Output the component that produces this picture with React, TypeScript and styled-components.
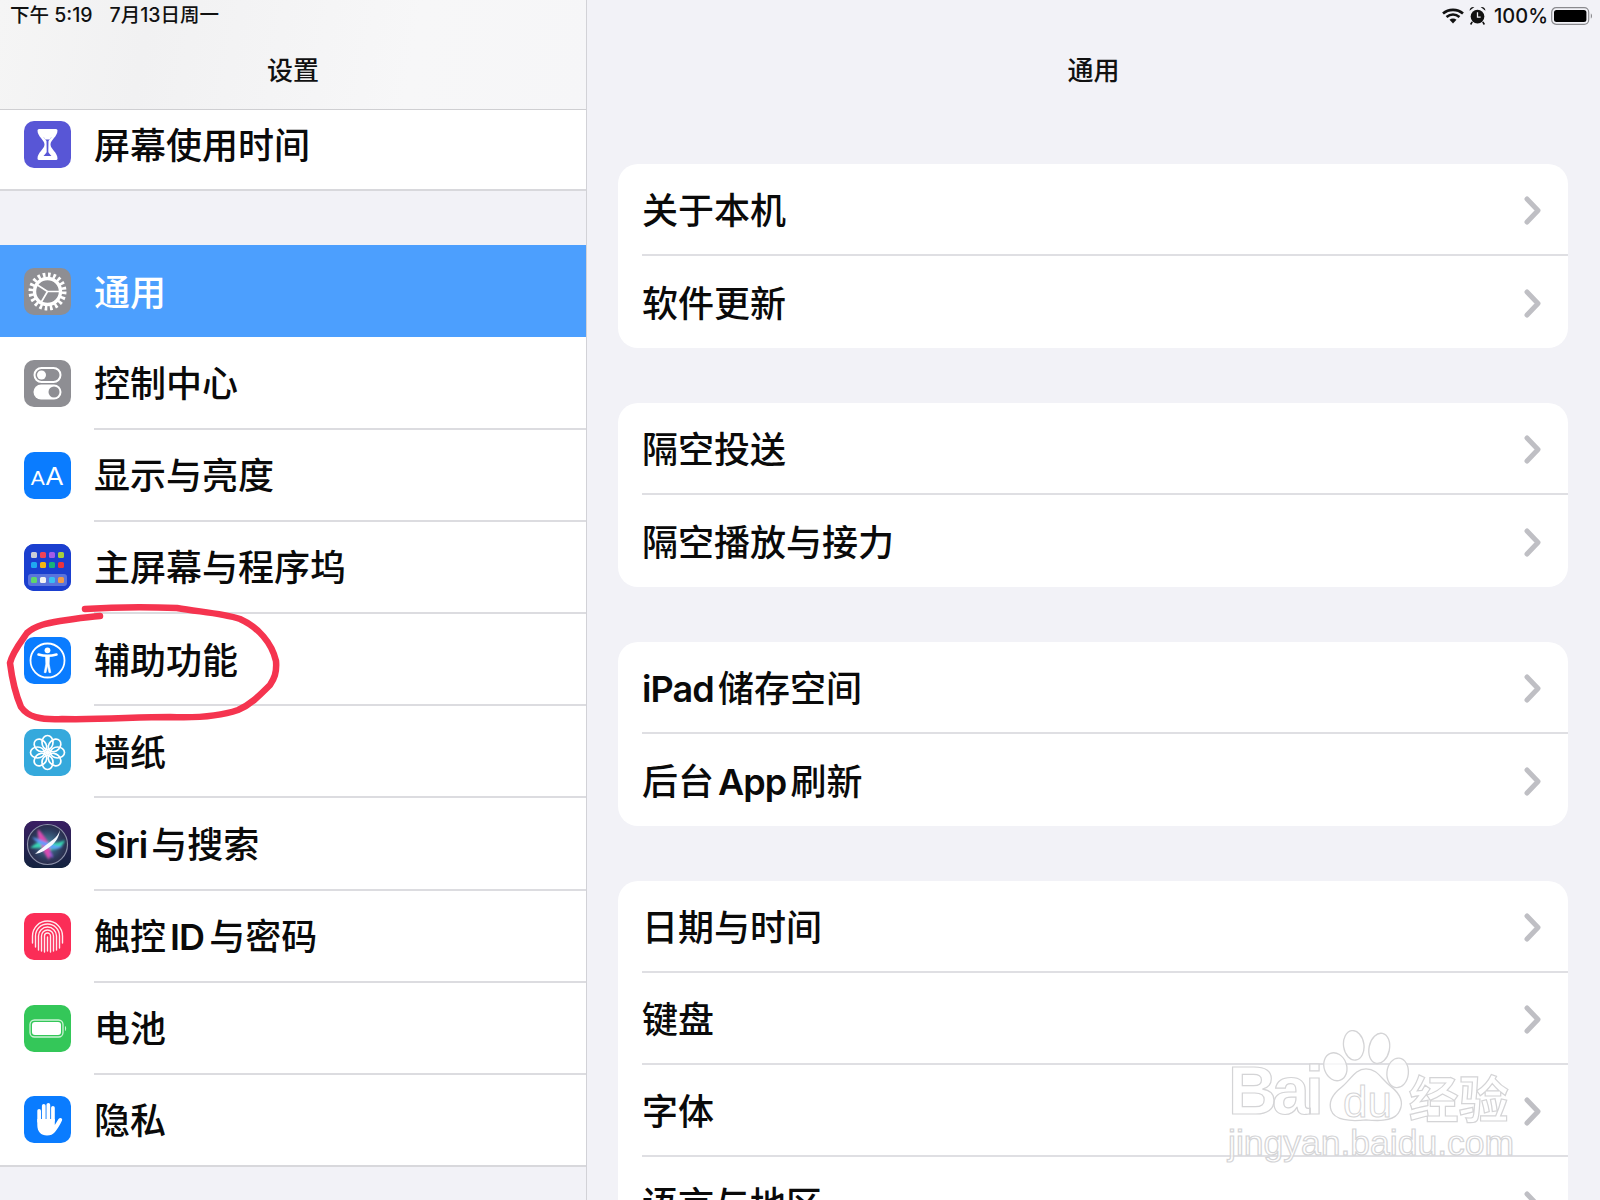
import React from "react";
import styled, { createGlobalStyle } from "styled-components";

const Global = createGlobalStyle`
  html, body { margin: 0; padding: 0; background: #f2f2f7; }
  body { font-family: Inter, "Noto Sans CJK SC", "Noto Sans", sans-serif; color: #0a0a0a; }
`;

const Screen = styled.div`
  position: relative;
  display: flex;
  width: 1600px;
  height: 1200px;
  overflow: hidden;
  background: #f2f2f7;
`;

const Sidebar = styled.aside`
  display: flex;
  flex-direction: column;
  width: 587px;
  flex: none;
  height: 100%;
  box-sizing: border-box;
  border-right: 1px solid #d2d2d7;
  background: #f2f2f7;
`;

const Bar = styled.header<{ $side?: boolean }>`
  flex: none;
  height: 110px;
  box-sizing: border-box;
  display: flex;
  flex-direction: column;
  background: ${(p) => (p.$side ? "linear-gradient(100deg, #f5f5f5 0%, #f1f1f2 25%, #f7f7f8 70%, #f6f6f8 100%)" : "#f2f2f7")};
  border-bottom: ${(p) => (p.$side ? "1px solid #cfcfd2" : "1px solid #f2f2f7")};
`;

const StatusRow = styled.div<{ $end?: boolean }>`
  height: 31px;
  display: flex;
  align-items: center;
  justify-content: ${(p) => (p.$end ? "flex-end" : "flex-start")};
  gap: 5px;
  padding: 0 7px 0 10px;
  font-size: 19.5px;
  font-weight: 500;
  line-height: 1;
  color: #111;
`;

const DateText = styled.span`
  margin-left: 12px;
`;

const Percent = styled.span`
  font-size: 20px;
  margin: 0 -2px 0 3px;
`;

const Title = styled.h1`
  margin: 0;
  flex: 1;
  display: flex;
  align-items: center;
  justify-content: center;
  padding-bottom: 4px;
  font-size: 26px;
  font-weight: 500;
  color: #111;
`;

const SideList = styled.div`
  flex: 1;
  overflow: hidden;
  display: flex;
  flex-direction: column;
`;

const SideGroup = styled.div<{ $top?: boolean }>`
  display: flex;
  flex-direction: column;
  margin-top: ${(p) => (p.$top ? "-11px" : "54px")};
  background: #fff;
  flex: none;
`;

const SideRow = styled.div<{ $selected?: boolean; $last?: boolean }>`
  display: flex;
  align-items: stretch;
  height: 92.2px;
  box-sizing: border-box;
  background: ${(p) => (p.$selected ? "#4c9ffe" : "#fff")};
  border-bottom: ${(p) => (p.$last ? "2px solid #d8d8dc" : "none")};
`;

const IconSlot = styled.div`
  flex: none;
  width: 94px;
  box-sizing: border-box;
  padding-left: 24px;
  display: flex;
  align-items: center;
`;

const IconTile = styled.div<{ $bg: string }>`
  width: 47px;
  height: 47px;
  border-radius: 10px;
  background: ${(p) => p.$bg};
  display: flex;
  align-items: center;
  justify-content: center;
  overflow: hidden;
  color: #fff;
  svg { display: block; }
`;

const AaGlyph = styled.span`
  font-family: "Liberation Sans", sans-serif;
  font-size: 26px;
  line-height: 1;
  letter-spacing: 1px;
  color: #fff;
`;
const SmallA = styled.span`
  font-size: 21px;
`;

const SideBody = styled.div<{ $plain?: boolean; $selected?: boolean }>`
  flex: 1;
  display: flex;
  align-items: center;
  font-size: 36px;
  font-weight: 500;
  line-height: 1;
  padding-top: 3px;
  box-sizing: border-box;
  color: ${(p) => (p.$selected ? "#fff" : "#0a0a0a")};
  border-bottom: ${(p) => (p.$plain ? "none" : "2px solid #dcdce0")};
`;

const Detail = styled.main`
  flex: 1;
  height: 100%;
  display: flex;
  flex-direction: column;
  min-width: 0;
`;

const DetailBody = styled.div`
  flex: 1;
  overflow: hidden;
  padding: 54px 32px 0 31px;
  display: flex;
  flex-direction: column;
  gap: 54.6px;
`;

const Card = styled.section`
  flex: none;
  background: #fff;
  border-radius: 20px;
  overflow: hidden;
`;

const CardRow = styled.div`
  display: flex;
  height: 92.2px;
  box-sizing: border-box;
  padding-left: 24px;
`;

const CardBody = styled.div<{ $last?: boolean }>`
  flex: 1;
  display: flex;
  align-items: center;
  justify-content: space-between;
  padding-right: 27px;
  padding-top: 3px;
  font-size: 36px;
  font-weight: 500;
  line-height: 1;
  color: #0a0a0a;
  box-sizing: border-box;
  border-bottom: ${(p) => (p.$last ? "none" : "2px solid #dfdfe3")};
`;

const Latin = styled.span<{ $before?: number; $after?: number }>`
  margin-left: ${(p) => p.$before ?? 0}px;
  margin-right: ${(p) => p.$after ?? 0}px;
  letter-spacing: -0.9px;
  font-weight: 600;
`;

const Stroke = styled.div`
  position: absolute;
  left: 0;
  top: 591px;
  width: 300px;
  height: 145px;
  pointer-events: none;
  svg { display: block; }
`;

const Watermark = styled.div`
  position: absolute;
  left: 1228px;
  top: 1030px;
  width: 300px;
  height: 140px;
  display: flex;
  flex-direction: column;
  pointer-events: none;
  color: rgba(255, 255, 255, 0.75);
  -webkit-text-stroke: 1.2px #d4d4d6;
  font-family: "Liberation Sans", "Noto Sans CJK SC", sans-serif;
`;

const MarkTop = styled.div`
  height: 94px;
  display: flex;
  align-items: flex-end;
  font-size: 68px;
  font-weight: 700;
  line-height: 1;
  letter-spacing: -5px;
  svg { flex: none; margin: 0 0 -4px 2px; }
`;

const MarkCjk = styled.span`
  font-family: "Noto Sans CJK SC", sans-serif;
  font-size: 50px;
  font-weight: 700;
  line-height: 56px;
  letter-spacing: 0;
  margin-left: -2px;
`;

const MarkUrl = styled.div`
  font-size: 35.500px;
  line-height: 38px;
  white-space: nowrap;
`;

const DuText = styled.span`
  position: absolute;
  left: 1343px;
  top: 1080px;
  font-family: "Liberation Sans", sans-serif;
  font-size: 44px;
  line-height: 1;
  color: rgba(255, 255, 255, 0.75);
  -webkit-text-stroke: 1px #d4d4d6;
  pointer-events: none;
`;

const Hourglass = () => (
  <svg width="47" height="47" viewBox="0 0 47 47">
    <path d="M15 8h17a1.500 1.500 0 0 1 1.500 1.500c0 6-7 9.500-7 14 0 4.500 7 8 7 14a1.500 1.500 0 0 1-1.500 1.500H15a1.500 1.500 0 0 1-1.500-1.500c0-6 7-9.500 7-14 0-4.500-7-8-7-14A1.500 1.500 0 0 1 15 8z" fill="#fff" />
    <path d="M19.500 16h8l-3 4-.2 10.500c0 1.500 2.200 3 3.200 4.500h-8c1-1.500 3.200-3 3.200-4.500L22.500 20z" fill="#5856d6" />
    <path d="M22.500 15h2.200v1h-2.200z" fill="#fff" />
    <path d="M19 15h9l-2.300 3.500h-4.400z" fill="#fff" />
  </svg>
);

const Gear = () => (
  <svg width="47" height="47" viewBox="0 0 47 47" fill="none" stroke="#fff">
    <circle cx="23.500" cy="23.500" r="16.500" strokeWidth="5" strokeDasharray="2.600 2.585" />
    <circle cx="23.500" cy="23.500" r="13" strokeWidth="3.400" />
    <path d="M23.500 23.500L13.500 17M23.500 23.500H36M23.500 23.500L17 34.500" strokeWidth="1.700" />
  </svg>
);

const Toggles = () => (
  <svg width="47" height="47" viewBox="0 0 47 47" fill="none">
    <rect x="10.500" y="8" width="26" height="14" rx="7" stroke="#fff" strokeWidth="2" />
    <circle cx="17.500" cy="15" r="4.500" fill="#fff" />
    <rect x="9.500" y="24.500" width="28" height="15" rx="7.500" fill="#fff" />
    <circle cx="30" cy="32" r="5.500" fill="#8e8e93" />
  </svg>
);

const DOCK_ROWS = [
  { y: 8, fill: ["#c9cdd6", "#ef4358", "#a35be8", "#a5cf3e"] },
  { y: 18, fill: ["#1fa9f0", "#f4b514", "#18b27a", "#e8333f"] },
];
const DOCK_COLS = [7, 16, 25, 34];
const DOCK_BOTTOM = ["#5fd66a", "#f2f2f2", "#39bdf2", "#f09a4a"];

const Dock = () => (
  <svg width="47" height="47" viewBox="0 0 47 47">
    <rect width="47" height="47" fill="#1b3fcf" />
    {DOCK_ROWS.map((r) =>
      DOCK_COLS.map((x, i) => <rect key={`${r.y}-${x}`} x={x} y={r.y} width="6" height="6" rx="1.500" fill={r.fill[i]} />)
    )}
    <rect x="4" y="30" width="39" height="12" rx="3" fill="#fff" opacity=".28" />
    {DOCK_COLS.map((x, i) => (
      <rect key={x} x={x} y="33" width="6" height="6" rx="1.500" fill={DOCK_BOTTOM[i]} />
    ))}
  </svg>
);

const Accessibility = () => (
  <svg width="47" height="47" viewBox="0 0 47 47" fill="none" stroke="#fff">
    <circle cx="23.500" cy="23.500" r="17" strokeWidth="1.800" />
    <circle cx="23.500" cy="13.300" r="2.900" fill="#fff" stroke="none" />
    <path d="M14.500 17.500c3 .9 6 1.300 9 1.300s6-.4 9-1.300" strokeWidth="2.600" strokeLinecap="round" />
    <path d="M21.500 18.500h4l-.3 8.500 1.600 8.500-1.800.2-1.500-7.200-1.500 7.200-1.800-.2 1.600-8.500z" fill="#fff" stroke="#fff" strokeWidth=".6" strokeLinejoin="round" />
  </svg>
);

const Flower = () => (
  <svg width="47" height="47" viewBox="0 0 47 47" fill="none" stroke="#fff" strokeWidth="1.700">
    {[0, 45, 90, 135, 180, 225, 270, 315].map((a) => (
      <ellipse key={a} cx="23.500" cy="13.500" rx="5.500" ry="7" transform={`rotate(${a} 23.500 23.500)`} />
    ))}
    <circle cx="23.500" cy="23.500" r="2.500" fill="#fff" stroke="none" />
  </svg>
);

const Siri = () => (
  <svg width="47" height="47" viewBox="0 0 47 47">
    <defs>
      <linearGradient id="siriBg" x1="0" y1="0" x2="0" y2="1">
        <stop offset="0" stopColor="#3a1f63" />
        <stop offset="1" stopColor="#13233f" />
      </linearGradient>
      <radialGradient id="siriOrb" cx=".5" cy=".5" r=".5">
        <stop offset="0" stopColor="#4d8aa8" />
        <stop offset=".75" stopColor="#2c3a5c" />
        <stop offset="1" stopColor="#2a2c4c" />
      </radialGradient>
      <filter id="siriSoft" x="-20%" y="-20%" width="140%" height="140%">
        <feGaussianBlur stdDeviation=".8" />
      </filter>
    </defs>
    <rect width="47" height="47" fill="url(#siriBg)" />
    <circle cx="23.500" cy="23.500" r="20" fill="url(#siriOrb)" stroke="#8a90a8" strokeWidth="1.200" />
    <g filter="url(#siriSoft)">
      <path d="M6 27c6-5 12-8 18-6 6 2 11 1 17-2-3 9-11 11-18 9-6-2-11-1-17-1z" fill="#38d8b4" />
      <path d="M14 8c4 4 7 8 10 13 3 5 3 12 1 18-4-5-6-10-8-15-2-5-4-10-3-16z" fill="#d84bb0" />
      <path d="M8 16c6 2 11 4 16 6 5 2 10 4 15 3-5 4-11 3-16 1-5-2-11-5-15-10z" fill="#5f9cff" />
      <path d="M26 30c2 2 3 4 3 7-3-1-4-4-3-7z" fill="#9d58e0" />
    </g>
    <path d="M36 9c-2 6-6 9-10 12-5 4-10 7-15 12 6-1 11-4 16-8 5-4 8-9 9-16z" fill="#f6f8ff" />
  </svg>
);

const Fingerprint = () => (
  <svg width="47" height="47" viewBox="0 0 47 47" fill="none" stroke="#fff" strokeWidth="1.400" strokeLinecap="round" opacity=".9">
    <path d="M8.500 30v-7a15 15 0 0 1 30 0v7" />
    <path d="M11.500 34V23a12 12 0 0 1 24 0v12" />
    <path d="M14.500 37V23a9 9 0 0 1 18 0v14" />
    <path d="M17.500 38V23a6 6 0 0 1 12 0v15" />
    <path d="M20.500 39V23a3 3 0 0 1 6 0v16" />
    <path d="M23.500 24v14" />
  </svg>
);

const BatteryTile = () => (
  <svg width="47" height="47" viewBox="0 0 47 47" fill="none">
    <rect x="6" y="15" width="33" height="17" rx="4.500" stroke="#cdf3d6" strokeWidth="1.300" />
    <rect x="8" y="17" width="29" height="13" rx="3" fill="#fff" />
    <path d="M41 21c1.500.5 1.500 4.500 0 5z" fill="#cdf3d6" />
  </svg>
);

const Hand = () => (
  <svg width="47" height="47" viewBox="0 0 47 47" fill="#fff">
    <rect x="13.300" y="13" width="3.700" height="14" rx="1.850" />
    <rect x="17.900" y="8" width="3.700" height="18" rx="1.850" />
    <rect x="22.500" y="7" width="3.700" height="18" rx="1.850" />
    <rect x="27.100" y="10" width="3.700" height="16" rx="1.850" />
    <path d="M13.300 23H30.800V29L34.500 23C36 21 39 22 38 24.500C36 29 33.500 33 31 36C29 38.500 26.500 39.500 23 39.500C17 39.500 13.300 35.500 13.300 29Z" />
  </svg>
);

const WifiIcon = () => (
  <svg width="22" height="16" viewBox="0 0 22 16" fill="none" stroke="#111" strokeLinecap="butt">
    <path d="M1 5.500C6.500.6 15.500.6 21 5.500" strokeWidth="2.600" />
    <path d="M4.500 9c4-3.300 9-3.300 13 0" strokeWidth="2.600" />
    <path d="M11 15.500l-3.500-3.700c2-1.700 5-1.700 7 0z" fill="#111" stroke="none" />
  </svg>
);

const AlarmIcon = () => (
  <svg width="17" height="19" viewBox="0 0 16 18">
    <circle cx="8" cy="10" r="6.500" fill="#111" />
    <path d="M8 6v4.500h3" stroke="#f2f2f7" strokeWidth="1.200" fill="none" />
    <path d="M.5 4.500C.5 2 2.500.5 5 1zM15.500 4.500C15.500 2 13.500.5 11 1z" fill="#111" />
    <path d="M3 15l-1.500 2.500M13 15l1.500 2.500" stroke="#111" strokeWidth="1.500" />
  </svg>
);

const BatteryIcon = () => (
  <svg width="42" height="20" viewBox="0 0 42 20" fill="none">
    <rect x=".7" y="1.700" width="37" height="16.600" rx="4.500" stroke="#8a8a8e" strokeWidth="1.200" />
    <rect x="3" y="4" width="32.400" height="12" rx="2.500" fill="#000" />
    <path d="M39.800 7.500c1.600.5 1.600 4.500 0 5z" fill="#8a8a8e" />
  </svg>
);

const Chevron = () => (
  <svg width="17" height="29" viewBox="0 0 17 29" fill="none" stroke="#bfbfc4" strokeWidth="5" strokeLinecap="round" strokeLinejoin="round">
    <path d="M3 3l11 11.500L3 26" />
  </svg>
);

const Paw = () => (
  <svg width="90" height="98" viewBox="0 0 88 96" fill="rgba(255,255,255,.75)" stroke="#d4d4d6" strokeWidth="1.300">
    <ellipse cx="14" cy="36" rx="11" ry="14" transform="rotate(-20 14 36)" />
    <ellipse cx="32" cy="15" rx="10" ry="14.500" transform="rotate(-8 32 15)" />
    <ellipse cx="57" cy="18" rx="10" ry="15" transform="rotate(12 57 18)" />
    <ellipse cx="75" cy="42" rx="10.500" ry="14.500" transform="rotate(6 75 42)" />
    <path d="M44 38c11 0 15 10 24 17 10 8 13 16 9 24-4 9-15 11-33 9-16 2-31 0-34-9-3-8 1-16 10-23 9-7 13-18 24-18z" />
  </svg>
);

type SideItem = { label: React.ReactNode; bg: string; icon: React.ReactNode };

const sideItems: SideItem[] = [
  { label: "控制中心", bg: "#8e8e93", icon: <Toggles /> },
  {
    label: "显示与亮度",
    bg: "#0a7cff",
    icon: (
      <AaGlyph>
        <SmallA>A</SmallA>A
      </AaGlyph>
    ),
  },
  { label: "主屏幕与程序坞", bg: "#1b3fcf", icon: <Dock /> },
  { label: "辅助功能", bg: "#0a7cff", icon: <Accessibility /> },
  { label: "墙纸", bg: "#35a9dc", icon: <Flower /> },
  { label: <><Latin $after={4}>Siri</Latin>与搜索</>, bg: "#1c2340", icon: <Siri /> },
  { label: <>触控<Latin $before={4} $after={5}>ID</Latin>与密码</>, bg: "#fb2d57", icon: <Fingerprint /> },
  { label: "电池", bg: "#34c759", icon: <BatteryTile /> },
  { label: "隐私", bg: "#0a7cff", icon: <Hand /> },
];

const cards: React.ReactNode[][] = [
  ["关于本机", "软件更新"],
  ["隔空投送", "隔空播放与接力"],
  [<><Latin $after={4}>iPad</Latin>储存空间</>, <>后台<Latin $before={4} $after={4}>App</Latin>刷新</>],
  ["日期与时间", "键盘", "字体", "语言与地区"],
];

export default function App() {
  return (
    <>
      <Global />
      <Screen>
        <Sidebar>
          <Bar $side>
            <StatusRow>
              <span>下午 5:19</span>
              <DateText>7月13日周一</DateText>
            </StatusRow>
            <Title>设置</Title>
          </Bar>
          <SideList>
            <SideGroup $top>
              <SideRow $last>
                <IconSlot>
                  <IconTile $bg="#5856d6"><Hourglass /></IconTile>
                </IconSlot>
                <SideBody $plain>屏幕使用时间</SideBody>
              </SideRow>
            </SideGroup>
            <SideGroup>
              <SideRow $selected>
                <IconSlot>
                  <IconTile $bg="#8e8e93"><Gear /></IconTile>
                </IconSlot>
                <SideBody $plain $selected>通用</SideBody>
              </SideRow>
              {sideItems.map((item, i) => (
                <SideRow key={i} $last={i === sideItems.length - 1}>
                  <IconSlot>
                    <IconTile $bg={item.bg}>{item.icon}</IconTile>
                  </IconSlot>
                  <SideBody $plain={i === sideItems.length - 1}>{item.label}</SideBody>
                </SideRow>
              ))}
            </SideGroup>
          </SideList>
        </Sidebar>
        <Detail>
          <Bar>
            <StatusRow $end>
              <WifiIcon />
              <AlarmIcon />
              <Percent>100%</Percent>
              <BatteryIcon />
            </StatusRow>
            <Title>通用</Title>
          </Bar>
          <DetailBody>
            {cards.map((rows, c) => (
              <Card key={c}>
                {rows.map((label, r) => (
                  <CardRow key={r}>
                    <CardBody $last={r === rows.length - 1}>
                      <span>{label}</span>
                      <Chevron />
                    </CardBody>
                  </CardRow>
                ))}
              </Card>
            ))}
          </DetailBody>
        </Detail>
        <Stroke>
          <svg width="300" height="145" viewBox="0 590 300 145" fill="none" stroke="#f5344f" strokeWidth="6.500" strokeLinecap="round" strokeLinejoin="round">
            <path d="M85 608C115 606 150 606 177 607C200 611 222 612 240 618C258 626 272 642 276 660C277 672 274 678 270 684C258 696 250 704 238 709C218 716 195 717 170 716C135 716 100 719 62 718C40 719 28 716 21 706C15 692 12 678 10 662C12 652 20 642 27 632C36 624 48 622 60 620C75 618 85 616 100 615" />
          </svg>
        </Stroke>
        <Watermark>
          <MarkTop>
            <span>Bai</span>
            <Paw />
            <MarkCjk>经验</MarkCjk>
          </MarkTop>
          <MarkUrl>jingyan.baidu.com</MarkUrl>
        </Watermark>
        <DuText>du</DuText>
      </Screen>
    </>
  );
}
